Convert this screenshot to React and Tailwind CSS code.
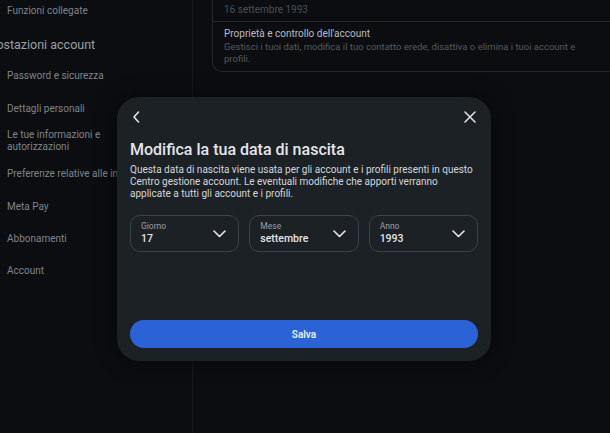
import React from 'react';

const sideItems = [
  { t: 'Password e sicurezza', h: 'h-[33px]' },
  { t: 'Dettagli personali', h: 'h-[26px]' },
  { t: 'Le tue informazioni e', t2: 'autorizzazioni', h: 'h-[39px]' },
  { t: 'Preferenze relative alle inserzioni', h: 'h-[33px]' },
  { t: 'Meta Pay', h: 'h-[32px]' },
  { t: 'Abbonamenti', h: 'h-[32px]' },
  { t: 'Account', h: 'h-[32px]' },
];

function Chevron() {
  return (
    <svg width="13" height="8" viewBox="0 0 13 8" fill="none" stroke="#e4e6eb" strokeWidth="1.6" strokeLinecap="round" strokeLinejoin="round">
      <path d="M1 1l5.5 5.5L12 1" />
    </svg>
  );
}

function DateSelect({ label, value }) {
  return (
    <div className="flex h-[37px] flex-1 items-center justify-between rounded-[10px] border border-[#3b4249] pl-[10px] pr-[12px]">
      <div className="flex flex-col">
        <span className="text-[8.5px] leading-[11px] text-[#9a9fa5]">{label}</span>
        <span className="text-[10.5px] font-medium leading-[14px] text-[#e4e6eb]">{value}</span>
      </div>
      <Chevron />
    </div>
  );
}

export default function App() {
  return (
    <div className="relative flex h-[433px] w-[610px] overflow-hidden bg-[#0b0d10] font-['Roboto',sans-serif]">
      {/* sidebar */}
      <div className="flex w-[193px] shrink-0 flex-col overflow-hidden border-r border-[#16191d] pt-[4px] text-[10px] text-[#7f848a]">
        <div className="pl-[7px] leading-[14px]">Funzioni collegate</div>
        <div className="ml-[-25px] mt-[19px] whitespace-nowrap text-[12.5px] leading-[16px] text-[#9ca0a5]">Impostazioni account</div>
        <div className="mt-[17px] flex flex-col">
          {sideItems.map((it, i) => (
            <div key={i} className={`whitespace-nowrap pl-[7px] leading-[12px] ${it.h}`}>
              {it.t}
              {it.t2 && (<><br />{it.t2}</>)}
            </div>
          ))}
        </div>
      </div>

      {/* main */}
      <div className="flex-1 pl-[19px]">
        <div className="rounded-bl-[10px] border-b border-l border-[#24282d]">
          <div className="border-b border-[#24282d] pb-[5px] pl-[11px] pt-[3px] text-[10px] leading-[13px] text-[#4a4f55]">16 settembre 1993</div>
          <div className="pb-[6px] pl-[11px] pr-[10px] pt-[5px]">
            <div className="text-[10px] leading-[13px] text-[#b9bcc0]">Proprietà e controllo dell'account</div>
            <div className="mt-[1px] text-[9.5px] leading-[12px] text-[#55595f]">Gestisci i tuoi dati, modifica il tuo contatto erede, disattiva o elimina i tuoi account e profili.</div>
          </div>
        </div>
      </div>

      {/* modal */}
      <div className="absolute left-[117px] top-[97px] flex h-[264px] w-[374px] flex-col rounded-[22px] bg-[#1c2126] px-[13px] pb-[13px] pt-[12px] shadow-[0_0_20px_rgba(0,0,0,0.5)]">
        <div className="flex h-[16px] items-center justify-between">
          <svg width="16" height="16" viewBox="0 0 16 16" fill="none" stroke="#e4e6eb" strokeWidth="1.6" strokeLinecap="round" strokeLinejoin="round" className="ml-[-1px]">
            <path d="M9.5 3L5 8l4.5 5" />
          </svg>
          <svg width="16" height="16" viewBox="0 0 16 16" fill="none" stroke="#e4e6eb" strokeWidth="1.5" strokeLinecap="round">
            <path d="M3 3l10 10M13 3L3 13" />
          </svg>
        </div>
        <h1 className="mt-[14px] text-[16px] font-medium leading-[22px] text-[#e4e6eb]">Modifica la tua data di nascita</h1>
        <p className="mt-[3px] text-[10px] leading-[12px] text-[#d4d6da]">
          Questa data di nascita viene usata per gli account e i profili presenti in questo Centro gestione account. Le eventuali modifiche che apporti verranno applicate a tutti gli account e i profili.
        </p>
        <div className="mt-[15px] flex gap-[10px]">
          <DateSelect label="Giorno" value="17" />
          <DateSelect label="Mese" value="settembre" />
          <DateSelect label="Anno" value="1993" />
        </div>
        <div className="flex-1" />
        <button className="h-[28px] w-full rounded-full bg-[#2b63d6] text-[10px] font-semibold text-[#e8eefc]">Salva</button>
      </div>
    </div>
  );
}
